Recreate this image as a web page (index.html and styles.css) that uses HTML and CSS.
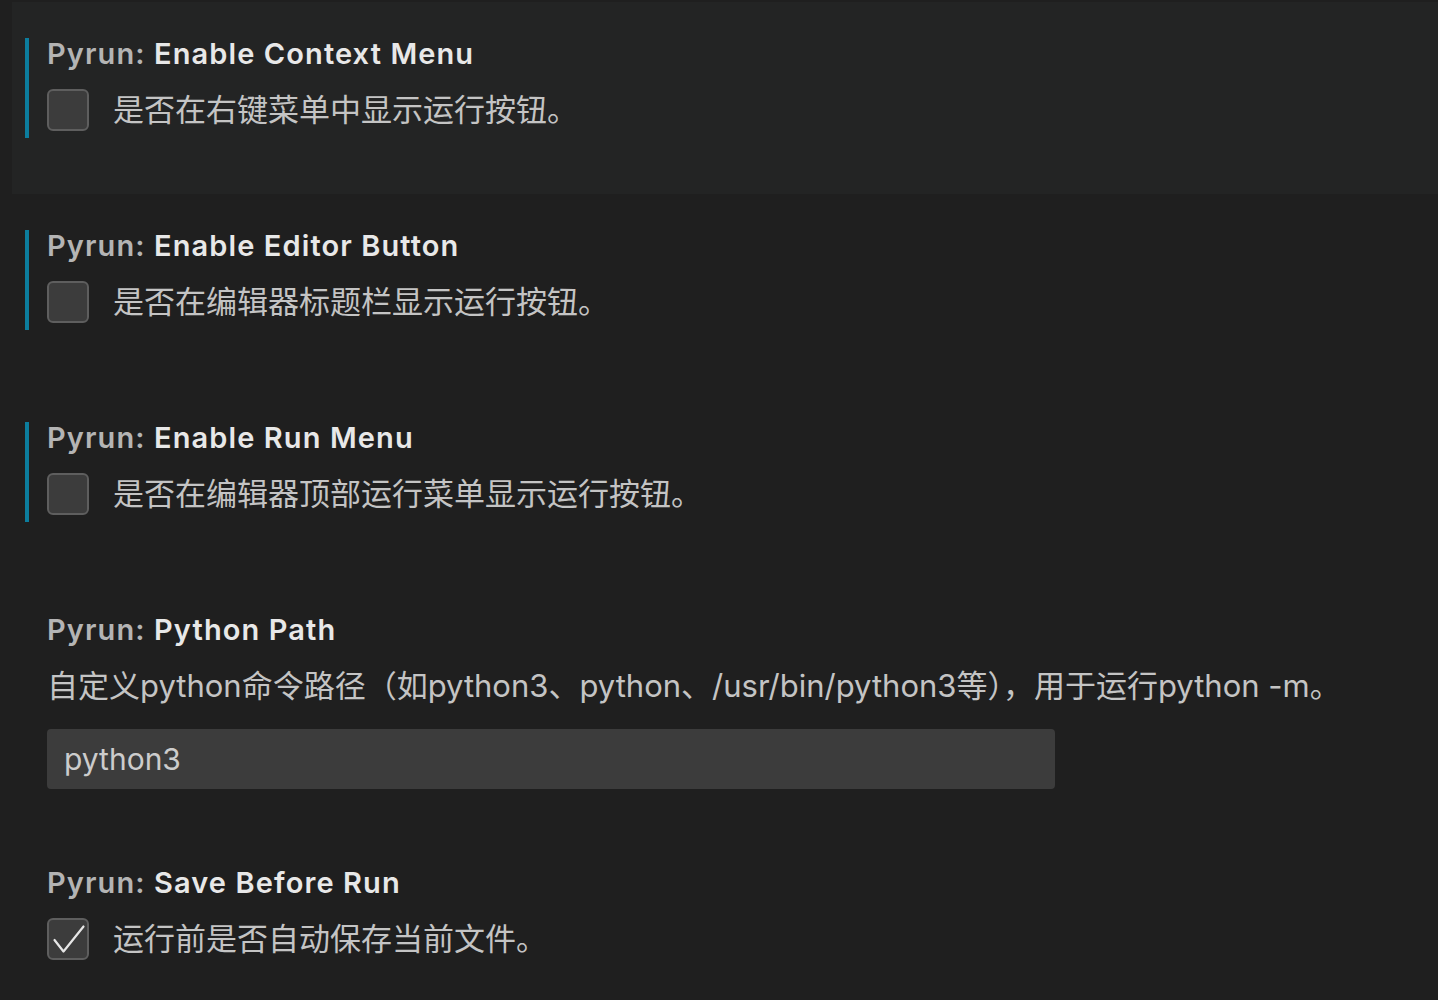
FILE: index.html
```html
<!DOCTYPE html>
<html lang="zh-CN">
<head>
<meta charset="utf-8">
<title>Pyrun Settings</title>
<link rel="stylesheet" href="styles.css">
</head>
<body>
<div class="list">
  <div class="item item-hover">
    <div class="content modified">
      <div class="title"><span class="cat">Pyrun: </span><span class="name">Enable Context Menu</span></div>
      <label class="bool-row">
        <span class="checkbox"></span>
        <span class="desc">是否在右键菜单中显示运行按钮。</span>
      </label>
    </div>
  </div>
  <div class="item">
    <div class="content modified">
      <div class="title"><span class="cat">Pyrun: </span><span class="name">Enable Editor Button</span></div>
      <label class="bool-row">
        <span class="checkbox"></span>
        <span class="desc">是否在编辑器标题栏显示运行按钮。</span>
      </label>
    </div>
  </div>
  <div class="item">
    <div class="content modified">
      <div class="title"><span class="cat">Pyrun: </span><span class="name">Enable Run Menu</span></div>
      <label class="bool-row">
        <span class="checkbox"></span>
        <span class="desc">是否在编辑器顶部运行菜单显示运行按钮。</span>
      </label>
    </div>
  </div>
  <div class="item item-text">
    <div class="content">
      <div class="title"><span class="cat">Pyrun: </span><span class="name">Python Path</span></div>
      <div class="desc desc-block">自定义python命令路径（如python3、python、/usr/bin/python3等），用于运行python -m。</div>
      <div class="input">python3</div>
    </div>
  </div>
  <div class="item">
    <div class="content">
      <div class="title"><span class="cat">Pyrun: </span><span class="name">Save Before Run</span></div>
      <label class="bool-row">
        <span class="checkbox checked">
          <svg viewBox="0 0 42 42" width="42" height="42"><path d="M7.5 22 L16.5 33.5 L36.5 8.5" fill="none" stroke="#e6e6e6" stroke-width="2.2" stroke-linecap="round" stroke-linejoin="round"/></svg>
        </span>
        <span class="desc">运行前是否自动保存当前文件。</span>
      </label>
    </div>
  </div>
</div>
</body>
</html>
```

FILE: styles.css
```css
html, body {
  margin: 0;
  padding: 0;
  background: #1f1f1f;
  height: 100%;
  overflow: hidden;
}

body {
  font-family: Inter, "Noto Sans CJK SC", "Noto Sans", sans-serif;
  color: #cccccc;
}

.list {
  padding-top: 2px;
  display: flex;
  flex-direction: column;
}

.item {
  margin-left: 12px;
  padding: 36px 0 56px 13px;
}

.item-hover {
  background: #232424;
}

.item-text {
  padding-bottom: 42px;
}

.content {
  padding-left: 18px;
  border-left: 4px solid transparent;
  padding-bottom: 7px;
}

.content.modified {
  border-left-color: #0c7d9d;
}

.item-text .content {
  padding-bottom: 0;
}

.title {
  font-size: 29px;
  line-height: 32px;
  font-weight: 600;
  letter-spacing: 1.1px;
  white-space: nowrap;
}

.cat {
  color: #b4b4b4;
}

.name {
  color: #e8e8e8;
}

.bool-row {
  display: flex;
  align-items: center;
  gap: 24px;
  margin-top: 19px;
}

.checkbox {
  box-sizing: border-box;
  width: 42px;
  height: 42px;
  flex: none;
  border: 2px solid #5e5e5e;
  border-radius: 6px;
  background: #3c3c3c;
  position: relative;
}

.checkbox svg {
  position: absolute;
  left: -2px;
  top: -2px;
}

.desc {
  font-size: 31px;
  line-height: 40px;
  color: #c4c4c4;
  white-space: nowrap;
}

.desc-block {
  margin-top: 20px;
}

.input {
  margin-top: 23px;
  width: 1008px;
  height: 60px;
  box-sizing: border-box;
  background: #3c3c3c;
  border-radius: 4px;
  padding-left: 17px;
  font-size: 30px;
  line-height: 60px;
  color: #cccccc;
}
```
